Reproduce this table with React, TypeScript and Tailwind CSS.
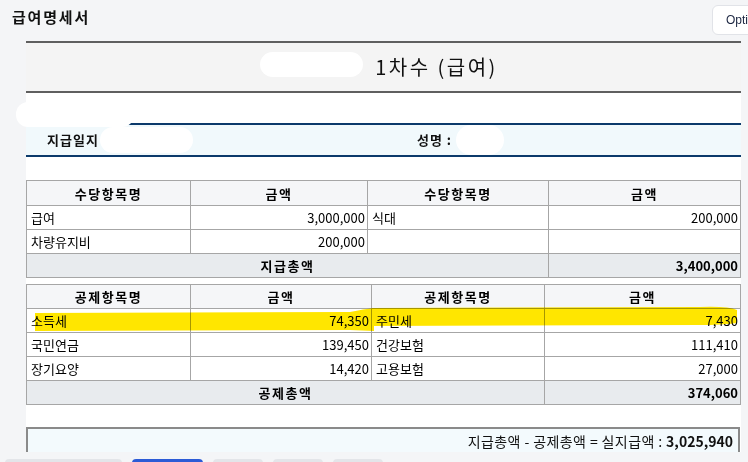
import React from "react";

const F = "font-['Noto_Sans_CJK_KR','Liberation_Sans',sans-serif]";

function Cell({
  children,
  className = "",
}: {
  children?: React.ReactNode;
  className?: string;
}) {
  return (
    <div className={`border-r border-b border-[#a6a6a6] flex items-center text-[13px] leading-none text-black ${className}`}>
      {children}
    </div>
  );
}

export default function App() {
  const t1 = [
    ["급여", "3,000,000", "식대", "200,000"],
    ["차량유지비", "200,000", "", ""],
  ];
  const t2 = [
    ["소득세", "74,350", "주민세", "7,430"],
    ["국민연금", "139,450", "건강보험", "111,410"],
    ["장기요양", "14,420", "고용보험", "27,000"],
  ];
  return (
    <div className={`relative w-[748px] h-[462px] overflow-hidden bg-[#f4f5f7] ${F}`}>
      {/* header */}
      <div className="flex items-start h-[41px]">
        <div className="pl-[12px] pt-[8px] text-[15px] font-bold leading-[18px] tracking-[1.8px] text-[#111]">급여명세서</div>
        <div className="flex-1" />
        <div className="mt-[5px] mr-[-34px] w-[70px] h-[30px] shrink-0 rounded-[6px] border border-[#e1e3e8] bg-white flex items-center pl-[13px] text-[12px] text-[#1b2540] font-['Liberation_Sans',sans-serif]">
          Opti
        </div>
      </div>

      {/* panel */}
      <div className="ml-[26px] w-[715px] h-[411px] bg-white overflow-hidden">
        {/* title band */}
        <div className="border-t-2 border-b-2 border-[#5f5f5f] bg-[#f4f4f4] h-[52px] flex items-center justify-center">
          <span className="inline-block w-[103px] h-[20px]" />
          <span className="ml-[3px] text-[20px] leading-none text-[#111] tracking-[2.5px]">1차수 (급여)</span>
        </div>
        <div className="h-[30px]" />
        {/* info band */}
        <div className="border-t-2 border-b-2 border-[#0c3a6b] bg-[#f1f9fc] h-[34px] flex items-center text-[13px] font-bold text-[#111]">
          <div className="pl-[21px] w-[391px] tracking-[1px]">지급일지</div>
          <div className="tracking-[1px]">성명 :</div>
        </div>
        <div className="h-[23px]" />

        {/* table 1 */}
        <div className="grid grid-cols-[164px_177px_181px_192px] border-t border-l border-[#a6a6a6]">
          {["수당항목명", "금액", "수당항목명", "금액"].map((h, i) => (
            <Cell key={i} className="h-[25px] justify-center font-bold bg-[#f5f6f8] tracking-[1.5px]">{h}</Cell>
          ))}
          {t1.map((r, ri) =>
            r.map((c, ci) => (
              <Cell key={`${ri}-${ci}`} className={`h-[24px] ${ci % 2 === 1 ? "justify-end pr-[2px] text-[12px]" : "pl-[4px]"}`}>
                {c}
              </Cell>
            ))
          )}
          <Cell className="col-span-3 h-[24px] justify-center font-bold bg-[#e8ebee] tracking-[1.5px]">지급총액</Cell>
          <Cell className="h-[24px] justify-end pr-[2px] font-bold bg-[#e8ebee] text-[13px]">3,400,000</Cell>
        </div>

        <div className="h-[6px]" />

        {/* table 2 */}
        <div className="grid grid-cols-[164px_181px_173px_196px] border-t border-l border-[#a6a6a6]">
          {["공제항목명", "금액", "공제항목명", "금액"].map((h, i) => (
            <Cell key={i} className="h-[24px] justify-center font-bold bg-[#f5f6f8] tracking-[1.5px]">{h}</Cell>
          ))}
          {t2.map((r, ri) =>
            r.map((c, ci) => (
              <Cell key={`${ri}-${ci}`} className={`h-[24px] ${ci % 2 === 1 ? "justify-end pr-[2px] text-[12px]" : "pl-[4px]"}`}>
                {c}
              </Cell>
            ))
          )}
          <Cell className="col-span-3 h-[24px] justify-center font-bold bg-[#e8ebee] tracking-[1.5px]">공제총액</Cell>
          <Cell className="h-[24px] justify-end pr-[2px] font-bold bg-[#e8ebee] text-[13px]">374,060</Cell>
        </div>

        <div className="h-[22px]" />

        {/* bottom box */}
        <div className="w-[714px] h-[34px] border-t-2 border-l-2 border-r-2 border-[#8a8a8a] bg-[#f3fafd] flex items-start justify-end pr-[5px] pt-[5px]">
          <span className="text-[14px] leading-none text-[#111] tracking-[0.4px]">
            지급총액 - 공제총액 = 실지급액 : <b className="font-bold tracking-normal">3,025,940</b>
          </span>
        </div>
      </div>

      {/* bottom tabs */}
      <div className="flex items-start gap-[10px] mt-[7px] pl-[5px]">
        <div className="w-[117px] h-[6px] rounded-t-[4px] bg-[#e3e5e9]" />
        <div className="w-[71px] h-[6px] rounded-t-[4px] bg-[#2c5bd6]" />
        <div className="w-[50px] h-[6px] rounded-t-[4px] bg-[#e3e5e9]" />
        <div className="w-[50px] h-[6px] rounded-t-[4px] bg-[#e3e5e9]" />
        <div className="w-[50px] h-[6px] rounded-t-[4px] bg-[#e3e5e9]" />
      </div>

      {/* redaction blobs */}
      <div className="absolute left-[260px] top-[52px] w-[103px] h-[25px] rounded-full bg-white blur-[0.5px]" />
      <div className="absolute left-[16px] top-[102px] w-[118px] h-[25px] rounded-[12px] bg-white blur-[0.5px]" />
      <div className="absolute left-[100px] top-[127px] w-[93px] h-[26px] rounded-full bg-white blur-[0.5px]" />
      <div className="absolute left-[456px] top-[125px] w-[48px] h-[30px] rounded-full bg-white blur-[0.5px]" />

      {/* highlighter */}
      <svg className="absolute left-0 top-0 pointer-events-none mix-blend-multiply" width="748" height="462" viewBox="0 0 748 462">
        <path d="M35,313 L350,312 Q364,309 374,308 L374,331 L350,330 L35,331 Z" fill="#ffe600" />
        <path d="M371,308 L700,307 Q728,306 737,310 L737,323 Q722,325 700,325 L371,326 Z" fill="#ffe600" />
      </svg>
    </div>
  );
}
